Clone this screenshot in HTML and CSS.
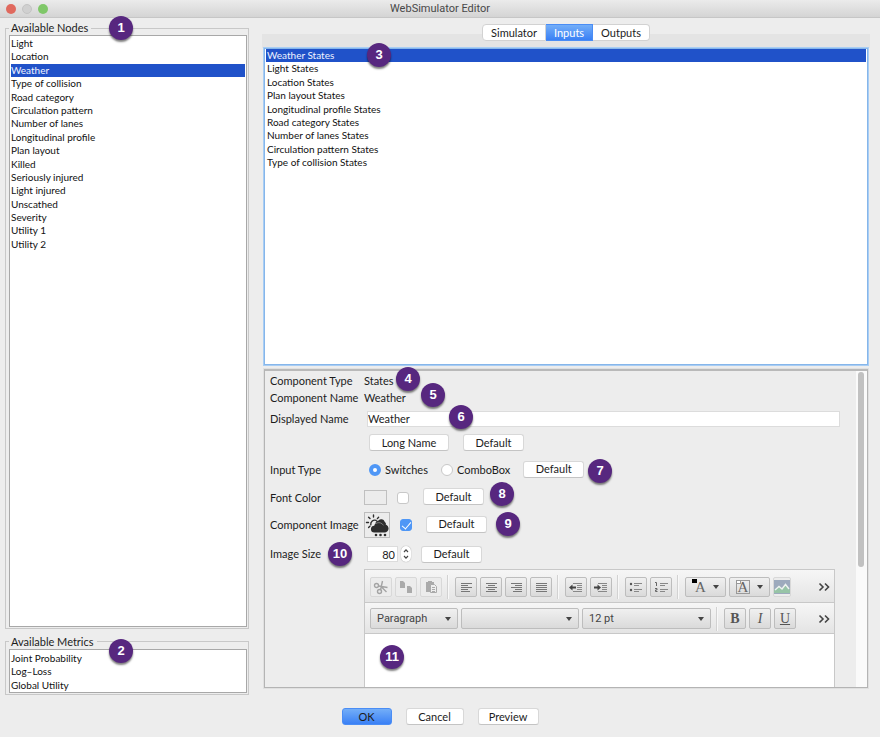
FILE: index.html
```html
<!DOCTYPE html>
<html lang="en">
<head>
<meta charset="utf-8">
<title>WebSimulator Editor</title>
<link rel="stylesheet" href="styles.css">
</head>
<body>
<header class="titlebar">
  <div class="lights"><span class="light red"></span><span class="light grey"></span><span class="light green"></span></div>
  <h1>WebSimulator Editor</h1>
</header>

<main class="main">
  <div class="left">
    <fieldset class="group group-nodes">
      <legend>Available Nodes</legend>
      <ul class="list">
        <li>Light</li>
        <li>Location</li>
        <li class="selected">Weather</li>
        <li>Type of collision</li>
        <li>Road category</li>
        <li>Circulation pattern</li>
        <li>Number of lanes</li>
        <li>Longitudinal profile</li>
        <li>Plan layout</li>
        <li>Killed</li>
        <li>Seriously injured</li>
        <li>Light injured</li>
        <li>Unscathed</li>
        <li>Severity</li>
        <li>Utility 1</li>
        <li>Utility 2</li>
      </ul>
      <span class="badge b1">1</span>
    </fieldset>
    <fieldset class="group">
      <legend>Available Metrics</legend>
      <ul class="list metrics">
        <li>Joint Probability</li>
        <li>Log–Loss</li>
        <li>Global Utility</li>
      </ul>
      <span class="badge b2">2</span>
    </fieldset>
  </div>

  <div class="right">
    <nav class="tabs">
      <button type="button">Simulator</button><button type="button" class="active">Inputs</button><button type="button">Outputs</button>
    </nav>
    <div class="split">
      <div class="states">
        <ul class="list focused">
          <li class="selected">Weather States</li>
          <li>Light States</li>
          <li>Location States</li>
          <li>Plan layout States</li>
          <li>Longitudinal profile States</li>
          <li>Road category States</li>
          <li>Number of lanes States</li>
          <li>Circulation pattern States</li>
          <li>Type of collision States</li>
        </ul>
        <span class="badge b3">3</span>
      </div>

      <div class="panel">
        <form class="form">
          <div class="row short"><span class="name">Component Type</span><span>States</span><span class="badge b4">4</span></div>
          <div class="row short"><span class="name">Component Name</span><span>Weather</span><span class="badge b5">5</span></div>
          <div class="row"><label class="name" for="shown">Displayed Name</label><input id="shown" class="text" type="text" value="Weather"><span class="badge b6">6</span></div>
          <div class="row names"><span class="name"></span><button type="button" class="btn long">Long Name</button><button type="button" class="btn">Default</button></div>
          <div class="row tall types"><span class="name">Input Type</span>
            <label class="choice"><input type="radio" name="type" checked>Switches</label>
            <label class="choice"><input type="radio" name="type">ComboBox</label>
            <button type="button" class="btn">Default</button><span class="badge b7">7</span></div>
          <div class="row tick"><label class="name" for="font-on">Font Color</label><button type="button" class="swatch" aria-label="Pick colour"></button><input id="font-on" type="checkbox"><button type="button" class="btn">Default</button><span class="badge b8">8</span></div>
          <div class="row tall tick"><label class="name" for="image-on">Component Image</label>
            <button type="button" class="image" aria-label="Pick image">
              <svg viewBox="0 0 24 24" width="24" height="24">
                <g stroke="#2e2e2e" stroke-width="1.4" stroke-linecap="round" fill="none">
                  <path d="M8.500 2v2M3.600 4.200l1.400 1.400M13.600 4.200l-1.200 1.400M1.500 9.500h2M3.600 14.500l1.300-1.300"/>
                  <path d="M5.800 11.800a4 4 0 0 1 5.400-4.400"/>
                </g>
                <path fill="#2e2e2e" d="M9.500 19.500a3.400 3.400 0 0 1-.3-6.800 5 5 0 0 1 9-1.200 4.100 4.100 0 1 1 1 8z"/>
                <path fill="#2e2e2e" d="M10.500 9.800a3 3 0 0 1 3-2.300 3.600 3.600 0 0 1 6.200 1.200 2.600 2.600 0 0 1 1 3.300l-6 1z"/>
                <path fill="none" stroke="#999" stroke-width=".7" d="M11 10.400a5.400 5.400 0 0 1 7.500 2"/>
                <circle cx="11" cy="22" r="1.300" fill="#2e2e2e"/><circle cx="15.500" cy="22" r="1.300" fill="#2e2e2e"/><circle cx="20" cy="22" r="1.300" fill="#2e2e2e"/>
              </svg>
            </button>
            <input id="image-on" type="checkbox" checked><button type="button" class="btn">Default</button><span class="badge b9">9</span></div>
          <div class="row size"><label class="name" for="px">Image Size</label><input id="px" class="number" type="number" value="80">
            <button type="button" class="stepper" aria-label="Change size"><svg viewBox="0 0 10 16" width="10" height="16" fill="none" stroke="#444" stroke-width="1.200"><path d="M3 6l2-2.200L7 6M3 10l2 2.200L7 10"/></svg></button>
            <button type="button" class="btn">Default</button><span class="badge b10">10</span></div>

          <div class="editor">
            <div class="bar">
              <button type="button" class="tool off" aria-label="Cut"><svg viewBox="0 0 16 16"><g fill="none" stroke="#a4a4a4" stroke-width="1.400"><circle cx="3.500" cy="6.500" r="2"/><circle cx="6.500" cy="12.500" r="2"/><path d="M5.500 7l9 1.500M7.500 11l2-9M8.500 8l5 5"/></g></svg></button>
              <button type="button" class="tool off" aria-label="Copy"><svg viewBox="0 0 16 16" fill="#aaa"><path d="M2 2h3l2 2v5H2zM9 7h3l2 2v5H9z"/></svg></button>
              <button type="button" class="tool off" aria-label="Paste"><svg viewBox="0 0 16 16"><path fill="#aaa" d="M3 3h2V2h4v1h2v2H8v8H3z"/><path fill="#eee" stroke="#aaa" d="M7.500 5.500h4l2 2v6h-6z"/><path stroke="#aaa" d="M9 8.500h3M9 10.500h3M9 12.500h3"/></svg></button>
              <span class="sep"></span>
              <button type="button" class="tool" aria-label="Align left"><svg viewBox="0 0 16 16" stroke="#777"><path d="M3 4.500h11M3 6.500h7M3 8.500h11M3 10.500h7M3 12.500h9"/></svg></button>
              <button type="button" class="tool" aria-label="Align centre"><svg viewBox="0 0 16 16" stroke="#777"><path d="M3 4.500h11M5 6.500h7M3 8.500h11M5 10.500h7M3 12.500h11"/></svg></button>
              <button type="button" class="tool" aria-label="Align right"><svg viewBox="0 0 16 16" stroke="#777"><path d="M3 4.500h11M7 6.500h7M3 8.500h11M7 10.500h7M5 12.500h9"/></svg></button>
              <button type="button" class="tool" aria-label="Justify"><svg viewBox="0 0 16 16" stroke="#777"><path d="M3 4.500h11M3 6.500h11M3 8.500h11M3 10.500h11M3 12.500h11"/></svg></button>
              <span class="sep"></span>
              <button type="button" class="tool" aria-label="Outdent"><svg viewBox="0 0 16 16" stroke="#888"><path d="M5 4.500h9M9 6.500h5M9 8.500h5M9 10.500h5M5 12.500h9"/><path stroke="none" fill="#444" d="M1 8.500L4.500 5.500v2H8v2H4.500v2z"/></svg></button>
              <button type="button" class="tool" aria-label="Indent"><svg viewBox="0 0 16 16" stroke="#888"><path d="M5 4.500h9M9 6.500h5M9 8.500h5M9 10.500h5M5 12.500h9"/><path stroke="none" fill="#444" d="M8 8.500L4.500 5.500v2H1v2h3.500v2z"/></svg></button>
              <span class="sep"></span>
              <button type="button" class="tool" aria-label="Bulleted list"><svg viewBox="0 0 16 16" stroke="#888"><path d="M6 4.500h8M6 6.500h5M6 10.500h8M6 12.500h5"/><circle cx="3" cy="5" r="1.200" fill="#555" stroke="none"/><circle cx="3" cy="11" r="1.200" fill="#555" stroke="none"/></svg></button>
              <button type="button" class="tool" aria-label="Numbered list"><svg viewBox="0 0 16 16" stroke="#888"><path d="M7 4.500h8M7 6.500h5M7 10.500h8M7 12.500h5"/><path fill="none" stroke="#666" d="M2 3.500h1.500V7M2 9.500h2v1.500H2.500v1.500h2"/></svg></button>
              <span class="sep"></span>
              <button type="button" class="tool wide" aria-label="Text colour"><span class="glyph"><i class="chip"></i>A</span><i class="caret"></i></button>
              <button type="button" class="tool wide" aria-label="Highlight colour"><span class="glyph boxed"><i class="chip pale"></i>A</span><i class="caret"></i></button>
              <button type="button" class="tool off picture" aria-label="Insert image"><svg viewBox="0 0 16 14"><path fill="#9daabd" d="M0 0h16v14H0z"/><path fill="#97c4a7" d="M0 13v-3l5-3.500 3 2.500 4-4.500 4 5.500v3z"/><path fill="none" stroke="#eef3f0" stroke-width="1.400" d="M1 10l4-3.500L8 9l3.500-4.500L15 9"/></svg></button>
              <button type="button" class="more" aria-label="More"><svg viewBox="0 0 12 10"><path fill="none" stroke="#444" stroke-width="1.600" d="M1.500 1.500L5 5 1.500 8.500M7 1.500L10.500 5 7 8.500"/></svg></button>
            </div>
            <div class="bar second">
              <span class="pick para"><select aria-label="Block style"><option>Paragraph</option></select></span>
              <span class="pick face"><select aria-label="Font"><option></option></select></span>
              <span class="pick points"><select aria-label="Font size"><option>12 pt</option></select></span>
              <span class="sep"></span>
              <button type="button" class="tool serif"><b>B</b></button>
              <button type="button" class="tool serif"><i>I</i></button>
              <button type="button" class="tool serif"><u>U</u></button>
              <button type="button" class="more" aria-label="More"><svg viewBox="0 0 12 10"><path fill="none" stroke="#444" stroke-width="1.600" d="M1.500 1.500L5 5 1.500 8.500M7 1.500L10.500 5 7 8.500"/></svg></button>
            </div>
            <textarea class="area" aria-label="Comment"></textarea>
            <span class="badge b11">11</span>
          </div>
        </form>
        <div class="scroll"><div class="thumb"></div></div>
      </div>
    </div>
  </div>
</main>

<footer class="footer">
  <button type="button" class="btn primary">OK</button>
  <button type="button" class="btn cancel">Cancel</button>
  <button type="button" class="btn">Preview</button>
</footer>
</body>
</html>
```
FILE: styles.css
```css
* { box-sizing: border-box; }

body {
  margin: 0;
  height: 100vh;
  display: flex;
  flex-direction: column;
  background: #ededed;
  color: #1c1c1c;
  font: 11px/14px Lato, "Open Sans", sans-serif;
}

button, input, select, textarea { font: inherit; color: inherit; margin: 0; }

/* Title bar */
.titlebar {
  position: relative;
  flex: none;
  height: 18px;
  border-bottom: 1px solid #c6c6c6;
  background: linear-gradient(#ebebeb, #d4d4d4);
}
.titlebar h1 {
  margin: 0;
  text-align: center;
  font: 11px/18px Roboto, sans-serif;
  color: #484848;
}
.lights { position: absolute; left: 6px; top: 4px; display: flex; gap: 6px; }
.light { width: 10px; height: 10px; border-radius: 50%; }
.red { background: #e0695e; }
.grey { background: #d0d0d0; border: 1px solid #c4c4c4; }
.green { background: #7fc768; }

.main {
  flex: 1;
  min-height: 0;
  display: flex;
  gap: 15px;
  padding: 3px 12px 0 5px;
}

/* Left column */
.left { flex: 0 0 244px; display: flex; flex-direction: column; gap: 6px; }
.group {
  position: relative;
  display: flex;
  margin: 0;
  min-width: 0;
  padding: 0 1px 1px 3px;
  border: 1px solid #c8c8c8;
}
.group-nodes { flex: 1; }
.group legend { padding: 0 3px 0 2px; height: 14px; }

.list {
  flex: 1;
  margin: 0;
  padding: 1px;
  list-style: none;
  background: #fff;
  border: 1px solid #a8a8a8;
  font-size: 10px;
  line-height: 1.34;
  color: #111;
}
.list li { padding-left: 0; white-space: nowrap; }
.list .selected { background: #2052c9; color: #eef3ff; }
.metrics { padding: 2px 1px 0; }

/* Right column */
.right { flex: 1; min-width: 0; display: flex; flex-direction: column; padding: 3px 0 7px; }
.tabs {
  flex: none;
  height: 24px;
  margin: 0 -2px;
  display: flex;
  justify-content: center;
  align-items: flex-start;
  background: linear-gradient(transparent 10px, #e4e4e4 10px);
}
.tabs button {
  height: 17px;
  padding: 0 8px;
  border: 1px solid #d2d2d2;
  border-left-width: 0;
  background: #fff;
  line-height: 14px;
}
.tabs button:first-child { border-left-width: 1px; border-radius: 4px 0 0 4px; }
.tabs button:last-child { border-radius: 0 4px 4px 0; }
.tabs .active { border-color: #4a8df5; background: linear-gradient(#73aef8, #3a80f5); color: #fff; }

.split { flex: 1; min-height: 0; display: flex; flex-direction: column; gap: 4px; }
.states, .panel { position: relative; flex: 1 1 0; min-height: 0; display: flex; }
.focused { padding: 0 1px; border-color: #86b6ea; outline: 1px solid #a8cdf4; }
.focused li { padding-left: 1px; }

.panel { border: 1px solid #b4b4b4; border-top: 2px solid #b9b9b9; outline: 1px solid #e0e0e0; }
.form { flex: 1; min-width: 0; min-height: 0; padding: 2px 21px 0 5px; display: flex; flex-direction: column; }
.scroll { flex: 0 0 11px; background: #fafafa; padding: 1px 3px 0 2px; }
.thumb { height: 62%; border-radius: 3px; background: #c1c1c1; }

.row { position: relative; flex: none; height: 24px; display: flex; align-items: center; }
.row.short { height: 17px; }
.row.tall { height: 31px; }
.name { flex: none; width: 94px; white-space: nowrap; }

.text {
  flex: 1;
  height: 16px;
  margin: 0 -5px 0 3px;
  padding: 0;
  border: 1px solid #dcdcdc;
  background: #fff;
}

.btn {
  width: 61px;
  height: 17px;
  padding: 0;
  border: 1px solid #d8d8d8;
  border-bottom-color: #c4c4c4;
  border-radius: 3px;
  background: #fff;
  line-height: 14px;
}
.long { width: 80px; }
.names { gap: 14px; }
.names .long { margin-left: -9px; }

.choice { display: flex; align-items: center; gap: 4px; }
.types { gap: 13px; }
.types .choice:nth-child(2) { margin-left: -8px; }
.types .btn, .tick .btn { margin-bottom: 2px; }

input[type="radio"], input[type="checkbox"] {
  appearance: none;
  width: 12px;
  height: 12px;
  border: 1px solid #c8c8c8;
  background: #fff;
}
input[type="radio"] { border-radius: 50%; }
input[type="radio"]:checked { border: 4px solid #4f97f6; }
input[type="checkbox"] { border-radius: 3px; }
input[type="checkbox"]:checked {
  position: relative;
  border-color: #4f97f6;
  background: #4f97f6;
}
input[type="checkbox"]:checked::after {
  content: "";
  position: absolute;
  left: 3px;
  top: 0;
  width: 4px;
  height: 8px;
  border: solid #fff;
  border-width: 0 1px 1px 0;
  transform: rotate(40deg);
}

.tick input { margin: 0 14px 0 10px; }
.swatch { width: 23px; height: 15px; padding: 0; border: 1px solid #c0c0c0; background: #ececec; }
.image { flex: none; width: 26px; height: 26px; padding: 0; border: 1px solid #bdbdbd; background: #ececec; }
.image svg { display: block; }

.row.size { height: 27px; }
.number {
  appearance: textfield;
  width: 31px;
  height: 16px;
  margin-left: 3px;
  padding: 0 2px;
  border: 1px solid #dcdcdc;
  background: #fff;
  text-align: right;
}
.number::-webkit-inner-spin-button { appearance: none; margin: 0; }
.stepper {
  width: 10px;
  height: 16px;
  margin: 0 10px 0 3px;
  padding: 0;
  border: 0;
  border-radius: 5px;
  background: #fff;
  box-shadow: 0 0 1px #888;
}
.stepper svg { display: block; }

/* Rich text editor */
.editor {
  position: relative;
  flex: 1;
  min-height: 0;
  display: flex;
  flex-direction: column;
  margin: 1px 0 0 94px;
  border: 1px solid #c8c8c8;
  border-bottom: 0;
  color: #444;
}
.bar {
  flex: none;
  height: 33px;
  display: flex;
  align-items: center;
  gap: 3px;
  padding: 2px 4px 0 5px;
  border-bottom: 1px solid #c8c8c8;
  background: linear-gradient(#f6f6f6, #e4e4e4);
}
.second { height: 31px; }
.tool {
  width: 22px;
  height: 20px;
  padding: 0;
  display: flex;
  align-items: center;
  justify-content: center;
  border: 1px solid #bdbdbd;
  border-radius: 2px;
  background: linear-gradient(#f0f0f0, #dadada);
}
.tool svg { width: 16px; height: 16px; }
.off { border-color: #d8d8d8; background: #ececec; }
.wide { width: 41px; gap: 7px; }
.picture { width: 18px; }
.picture svg { height: 14px; }
.sep { width: 2px; height: 24px; margin: 0 3px 0 2px; border-left: 1px solid #d2d2d2; background: #f8f8f8; }
.glyph { position: relative; padding-left: 3px; font: 15px/16px "Liberation Serif", serif; color: #666; }
.boxed { padding: 0 1px; line-height: 12px; border: 1px solid #999; }
.chip { position: absolute; left: 0; top: 0; width: 5px; height: 4px; background: #000; }
.chip.pale { left: -1px; top: -1px; border: 1px solid #999; background: #fff; }
.caret, .pick::after { border: 3px solid transparent; border-top: 4px solid #444; border-bottom: 0; }
.serif { height: 21px; font: 14px/18px "Liberation Serif", serif; color: #555; }
.more { margin-left: auto; padding: 0; border: 0; background: none; }
.more svg { display: block; width: 12px; height: 10px; }

.pick { position: relative; height: 21px; }
.pick select {
  appearance: none;
  width: 100%;
  height: 21px;
  padding: 0 6px;
  border: 1px solid #bdbdbd;
  border-radius: 2px;
  background: linear-gradient(#f0f0f0, #dadada);
  font: 11px/18px Roboto, sans-serif;
}
.pick::after { content: ""; position: absolute; right: 7px; top: 9px; pointer-events: none; }
.para { width: 88px; }
.face { width: 118px; }
.points { width: 129px; }
.area { flex: 1; min-height: 0; padding: 4px; border: 0; background: #fff; resize: none; }

/* Numbered callouts */
.badge {
  position: absolute;
  z-index: 1;
  width: 24px;
  height: 24px;
  border-radius: 50%;
  background: #57277f;
  color: #fff;
  text-align: center;
  font: bold 13px/24px "Liberation Sans", sans-serif;
  box-shadow: 0 2px 2px rgba(0, 0, 0, .5);
}
.b1, .b2 { left: 103px; }
.b1 { top: -19px; }
.b2 { top: -10px; }
.b3 { left: 103px; top: -5px; }
.b4 { left: 126px; top: -6px; }
.b5 { left: 151px; top: -7px; }
.b6 { left: 179px; top: -2px; }
.b7 { left: 318px; top: 4px; }
.b8 { left: 220px; top: -4px; }
.b9 { left: 226px; top: 2px; }
.b10 { left: 58px; top: 1px; }
.b11 { left: 15px; top: 75px; }

/* Dialog buttons */
.footer { flex: none; display: flex; justify-content: center; gap: 14px; padding: 13px 0 12px; }
.primary { width: 50px; border-color: #4a8df5; background: linear-gradient(#73aef8, #3a80f5); }
.cancel { width: 58px; }
```
